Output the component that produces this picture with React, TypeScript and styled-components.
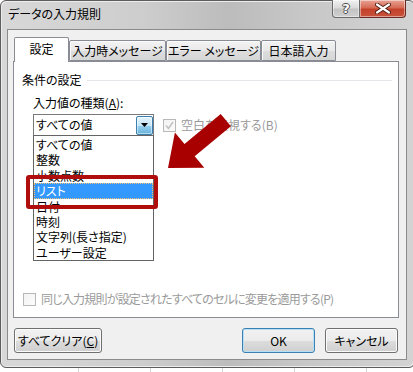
import React from 'react';
import styled, { createGlobalStyle } from 'styled-components';

const GlobalStyle = createGlobalStyle`
  html, body {
    margin: 0;
    padding: 0;
    background: #fff;
  }
  body {
    font-family: "Noto Sans CJK JP", "Noto Sans", sans-serif;
    font-size: 12px;
    color: #000;
    font-feature-settings: "palt" 1;
  }
  * {
    box-sizing: border-box;
  }
`;

const Screen = styled.div`
  width: 413px;
  height: 372px;
  overflow: hidden;
  position: relative;
  background: #fff;
`;

const Window = styled.div`
  width: 415px;
  height: 368px;
  border: 1px solid #5d5d5d;
  border-radius: 6px;
  background: linear-gradient(90deg, #d8d8d8 0%, #cdcdcd 35%, #bcbcbc 55%, #c8c8c8 75%, #d3d3d3 100%);
  box-shadow: inset 1px 1px 0 #ececec, inset -1px -1px 0 #ececec;
  padding: 0 7px 7px 6px;
  display: flex;
  flex-direction: column;
`;

const TitleBar = styled.div`
  height: 28px;
  display: flex;
  align-items: flex-start;
`;

const Title = styled.div`
  padding: 5px 0 0 1px;
  line-height: 16px;
  font-size: 12px;
`;

const Caption = styled.div`
  margin-left: auto;
  margin-top: -1px;
  margin-right: 1px;
  display: flex;
`;

const CaptionButton = styled.div<{ $close?: boolean }>`
  width: ${p => (p.$close ? 46 : 28)}px;
  height: 18px;
  display: flex;
  align-items: center;
  justify-content: center;
  border: 1px solid ${p => (p.$close ? '#6a2c22' : '#6b6b6b')};
  border-left: ${p => (p.$close ? 'none' : '1px solid #6b6b6b')};
  border-top: none;
  border-radius: ${p => (p.$close ? '0 0 4px 0' : '0 0 0 4px')};
  background: ${p =>
    p.$close
      ? 'linear-gradient(#e8a395 0%, #d66b55 45%, #c4412a 55%, #c9533c 100%)'
      : 'linear-gradient(#f1f1f1 0%, #dadada 45%, #c3c3c3 55%, #d0d0d0 100%)'};
  box-shadow: inset 0 0 0 1px rgba(255, 255, 255, 0.45);
`;

const HelpGlyph = styled.span`
  font-family: "DejaVu Sans", sans-serif;
  font-weight: bold;
  font-size: 13px;
  line-height: 13px;
  color: #fff;
  text-shadow: 1px 0 0 #4a4a4a, -1px 0 0 #4a4a4a, 0 1px 0 #4a4a4a, 0 -1px 0 #4a4a4a;
`;

const Client = styled.div`
  flex: 1;
  border: 1px solid #8b8b8b;
  background: #f0f0f0;
  padding: 7px 7px 6px 5px;
  display: flex;
  flex-direction: column;
`;

const TabStrip = styled.div`
  height: 24px;
  padding-left: 1px;
  display: flex;
  align-items: flex-end;
  position: relative;
  z-index: 1;
`;

const Tab = styled.div<{ $active?: boolean; $w: number }>`
  width: ${p => p.$w}px;
  height: ${p => (p.$active ? 25 : 21)}px;
  margin-bottom: ${p => (p.$active ? -1 : 0)}px;
  border: 1px solid #898c95;
  border-bottom: ${p => (p.$active ? 'none' : '1px solid #898c95')};
  border-radius: 2px 2px 0 0;
  background: ${p => (p.$active ? '#fff' : 'linear-gradient(#f3f3f3 0%, #e9e9e9 50%, #dddddd 51%, #d6d6d6 100%)')};
  box-shadow: ${p => (p.$active ? 'none' : 'inset 1px 1px 0 #fbfbfb')};
  display: flex;
  justify-content: center;
  align-items: ${p => (p.$active ? 'flex-start' : 'center')};
  padding-top: ${p => (p.$active ? 3 : 0)}px;
  line-height: 16px;
  white-space: nowrap;
`;

const Panel = styled.div`
  height: 257px;
  border: 1px solid #898c95;
  background: #fff;
  padding: 11px 6px 10px 8px;
  display: flex;
  flex-direction: column;
`;

const GroupHeading = styled.div`
  display: flex;
  align-items: center;
  line-height: 14px;
  height: 14px;
`;

const Rule = styled.div`
  flex: 1;
  height: 1px;
  margin-left: 5px;
  background: #e4e6e9;
`;

const Section = styled.div`
  padding-left: 11px;
  margin-top: 8px;
`;

const FieldLabel = styled.div`
  line-height: 16px;
  height: 16px;
`;

const ComboRow = styled.div`
  margin-top: 3px;
  display: flex;
  align-items: center;
`;

const Combo = styled.div`
  position: relative;
  width: 121px;
  height: 22px;
  border: 1px solid #7a7a7a;
  background: #fff;
  display: flex;
  align-items: center;
  padding-left: 2px;
  line-height: 16px;
`;

const ComboButton = styled.div`
  margin-left: auto;
  width: 17px;
  height: 19px;
  border: 1px solid #3c7fb1;
  border-radius: 2px;
  background: linear-gradient(#e5f4fc 0%, #c4e5f6 50%, #98d1ef 51%, #68b3db 100%);
  box-shadow: inset 0 0 0 1px rgba(255, 255, 255, 0.5);
  display: flex;
  align-items: center;
  justify-content: center;
`;

const DropList = styled.div`
  position: absolute;
  top: 100%;
  left: -1px;
  width: 121px;
  border: 1px solid #646464;
  background: #fff;
  padding-top: 1px;
  z-index: 3;
`;

const ListItem = styled.div<{ $selected?: boolean }>`
  height: 15.4px;
  line-height: 15.4px;
  padding-left: 2px;
  white-space: nowrap;
  color: ${p => (p.$selected ? '#fff' : '#000')};
  background: ${p => (p.$selected ? '#3399ff' : 'transparent')};
  outline: ${p => (p.$selected ? '1px dotted #f3c27a' : 'none')};
  outline-offset: -1px;
`;

const CheckRow = styled.label<{ $gap: number; $tight?: boolean }>`
  display: flex;
  align-items: center;
  margin-left: ${p => p.$gap}px;
  color: #9a9a9a;
  line-height: 16px;
  white-space: nowrap;
  letter-spacing: ${p => (p.$tight ? -0.8 : 0)}px;
`;

const CheckBox = styled.span`
  width: 13px;
  height: 13px;
  flex-shrink: 0;
  border: 1px solid #b8b8b8;
  background: linear-gradient(135deg, #f3f3f3, #fcfcfc);
  margin-right: 5px;
  display: flex;
  align-items: center;
  justify-content: center;
`;

const ApplyRow = styled(CheckRow)`
  margin-top: auto;
`;

const ButtonRow = styled.div`
  margin-top: 10px;
  height: 25px;
  padding-left: 1px;
  padding-right: 1px;
  display: flex;
  gap: 10px;
`;

const Button = styled.div<{ $w: number; $default?: boolean }>`
  width: ${p => p.$w}px;
  height: 25px;
  border: 1px solid ${p => (p.$default ? '#3c7fb1' : '#707070')};
  border-radius: 3px;
  background: linear-gradient(#f2f2f2 0%, #ebebeb 50%, #dddddd 51%, #cfcfcf 100%);
  box-shadow: inset 0 0 0 1px ${p => (p.$default ? '#b6e0f6' : '#fbfbfb')};
  display: flex;
  align-items: center;
  justify-content: center;
  line-height: 16px;
  white-space: nowrap;
`;

const Spacer = styled.div`
  flex: 1;
`;

const GridStrip = styled.div`
  display: flex;
  height: 4px;
`;

const GridCell = styled.div<{ $w: number }>`
  width: ${p => p.$w}px;
  flex-shrink: 0;
  border-right: 1px solid #d6d6d6;
`;

const HighlightBox = styled.div`
  position: absolute;
  left: 26px;
  top: 175px;
  width: 132px;
  height: 34px;
  border: 4px solid #b00d0d;
  border-radius: 3px;
  z-index: 5;
`;

const ArrowMark = styled.svg`
  position: absolute;
  left: 160px;
  top: 108px;
  z-index: 5;
`;

const items = ['すべての値', '整数', '小数点数', 'リスト', '日付', '時刻', '文字列(長さ指定)', 'ユーザー設定'];

function CheckMark() {
  return (
    <svg width="9" height="9" viewBox="0 0 9 9">
      <path d="M1 4.5 L3.5 7.5 L8 1" fill="none" stroke="#c2c2c2" strokeWidth="1.6" />
    </svg>
  );
}

export default function App() {
  return (
    <>
      <GlobalStyle />
      <Screen>
        <Window>
          <TitleBar>
            <Title>データの入力規則</Title>
            <Caption>
              <CaptionButton>
                <HelpGlyph>?</HelpGlyph>
              </CaptionButton>
              <CaptionButton $close>
                <svg width="16" height="11" viewBox="0 0 16 11">
                  <path d="M2 1.5 L14 9.5 M14 1.5 L2 9.5" stroke="#4a1c14" strokeWidth="4" strokeLinecap="round" />
                  <path d="M2 1.5 L14 9.5 M14 1.5 L2 9.5" stroke="#fff" strokeWidth="2.2" strokeLinecap="round" />
                </svg>
              </CaptionButton>
            </Caption>
          </TitleBar>
          <Client>
            <TabStrip>
              <Tab $active $w={55}>設定</Tab>
              <Tab $w={97}>入力時メッセージ</Tab>
              <Tab $w={95}>エラー メッセージ</Tab>
              <Tab $w={75}>日本語入力</Tab>
            </TabStrip>
            <Panel>
              <GroupHeading>
                条件の設定
                <Rule />
              </GroupHeading>
              <Section>
                <FieldLabel>
                  入力値の種類(<u>A</u>):
                </FieldLabel>
                <ComboRow>
                  <Combo>
                    すべての値
                    <ComboButton>
                      <svg width="7" height="4" viewBox="0 0 7 4">
                        <path d="M0 0 H7 L3.5 4 Z" fill="#000" />
                      </svg>
                    </ComboButton>
                    <DropList>
                      {items.map(item => (
                        <ListItem key={item} $selected={item === 'リスト'}>
                          {item}
                        </ListItem>
                      ))}
                    </DropList>
                  </Combo>
                  <CheckRow $gap={9}>
                    <CheckBox>
                      <CheckMark />
                    </CheckBox>
                    空白を無視する(B)
                  </CheckRow>
                </ComboRow>
              </Section>
              <ApplyRow $gap={1} $tight>
                <CheckBox />
                同じ入力規則が設定されたすべてのセルに変更を適用する(P)
              </ApplyRow>
            </Panel>
            <ButtonRow>
              <Button $w={88}>
                すべてクリア(<u>C</u>)
              </Button>
              <Spacer />
              <Button $w={73} $default>OK</Button>
              <Button $w={73}>キャンセル</Button>
            </ButtonRow>
          </Client>
        </Window>
        <GridStrip>
          <GridCell $w={79} />
          <GridCell $w={72} />
          <GridCell $w={72} />
          <GridCell $w={72} />
          <GridCell $w={72} />
          <GridCell $w={72} />
        </GridStrip>
        <HighlightBox />
        <ArrowMark width="80" height="68" viewBox="0 0 80 68">
          <polygon
            points="8,60 44.3,59.8 34.7,48.3 70.9,18.3 60.7,5.9 24.5,35.9 14.9,24.4"
            fill="#a80000"
          />
        </ArrowMark>
      </Screen>
    </>
  );
}
